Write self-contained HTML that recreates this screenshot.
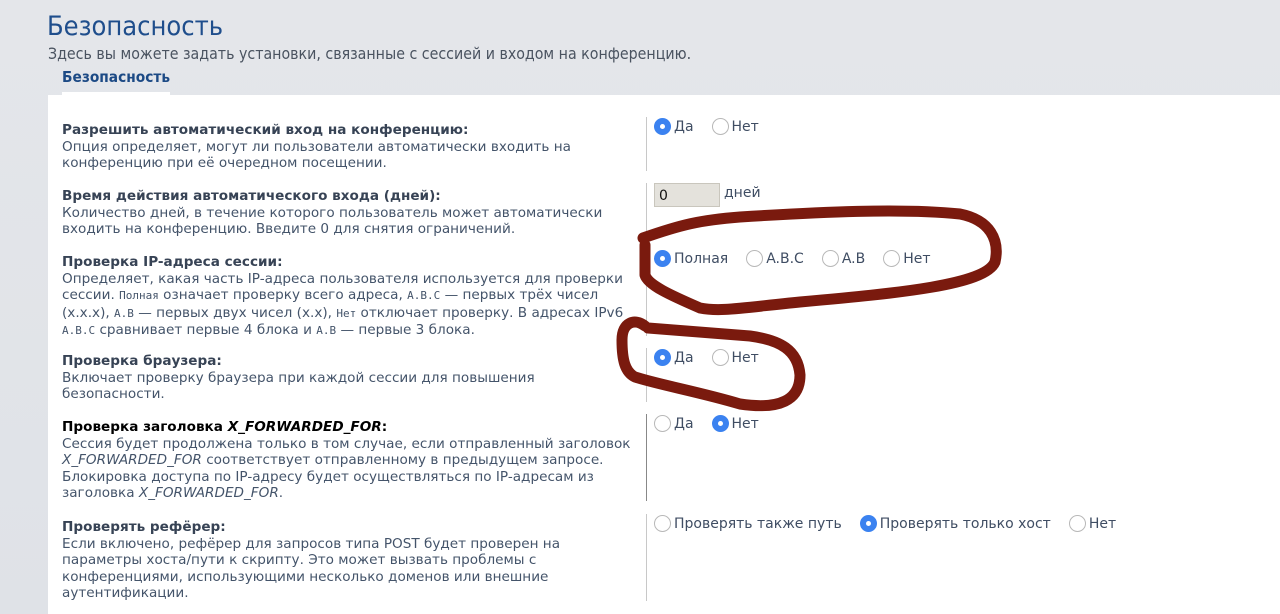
<!DOCTYPE html>
<html><head><meta charset="utf-8"><style>
body{margin:0;width:1280px;height:614px;overflow:hidden;background:linear-gradient(#e4e6ea,#dfe2e7);font-family:"DejaVu Sans","Liberation Sans",sans-serif;position:relative}
.t{position:absolute;left:47px;top:11px;font-size:27px;color:#1f4e8c;font-family:"DejaVu Sans Condensed","DejaVu Sans",sans-serif}
.sub{position:absolute;left:48px;top:44px;font-size:15.8px;color:#4a5360;font-family:"DejaVu Sans Condensed","DejaVu Sans",sans-serif}
.tab{position:absolute;left:62px;top:68px;font-size:15.3px;font-weight:bold;color:#1c4a85;font-family:"DejaVu Sans Condensed","DejaVu Sans",sans-serif}
.tabw{position:absolute;left:62px;top:92px;width:108px;height:4px;background:#fff}
.panel{position:absolute;left:48px;top:95px;right:0;bottom:0;background:#fff}
.row{position:absolute;left:62px;width:560px;font-size:13.6px;line-height:16.5px;color:#44546a}
.row b{color:#374355}
.row i{font-style:italic}
.m{font-family:"DejaVu Sans Mono",monospace;font-size:11px}
.vl{position:absolute;left:646px;width:1px;background:#c8c8c8}
.opt{position:absolute;font-size:14px;color:#3f4d63;display:flex;align-items:center}
.r{width:17px;height:17px;border-radius:50%;border:1px solid #b8b8b8;box-sizing:border-box;margin-right:3px;background:#fff}
.r.on{background:#3b82f0;border-color:#3b82f0;position:relative}
.r.on:after{content:"";position:absolute;left:5px;top:5px;width:5px;height:5px;border-radius:50%;background:#fff}
</style></head><body>
<div class="t">Безопасность</div>
<div class="sub">Здесь вы можете задать установки, связанные с сессией и входом на конференцию.</div>
<div class="tab">Безопасность</div>
<div class="panel"></div>
<div class="tabw"></div>

<div class="row" style="top:122px"><b>Разрешить автоматический вход на конференцию:</b><br>Опция определяет, могут ли пользователи автоматически входить на конференцию при её очередном посещении.</div>
<div class="row" style="top:188px"><b>Время действия автоматического входа (дней):</b><br>Количество дней, в течение которого пользователь может автоматически входить на конференцию. Введите 0 для снятия ограничений.</div>
<div class="row" style="top:254px;width:568px"><b>Проверка IP-адреса сессии:</b><br>Определяет, какая часть IP-адреса пользователя используется для проверки сессии. <span class="m">Полная</span> означает проверку всего адреса, <span class="m">A.B.C</span> — первых трёх чисел (x.x.x), <span class="m">A.B</span> — первых двух чисел (x.x), <span class="m">Нет</span> отключает проверку. В адресах IPv6 <span class="m">A.B.C</span> сравнивает первые 4 блока и <span class="m">A.B</span> — первые 3 блока.</div>
<div class="row" style="top:353px"><b>Проверка браузера:</b><br>Включает проверку браузера при каждой сессии для повышения безопасности.</div>
<div class="row" style="top:419px;width:575px"><b style="color:#000">Проверка заголовка <i>X_FORWARDED_FOR</i>:</b><br>Сессия будет продолжена только в том случае, если отправленный заголовок <i>X_FORWARDED_FOR</i> соответствует отправленному в предыдущем запросе. Блокировка доступа по IP-адресу будет осуществляться по IP-адресам из заголовка <i>X_FORWARDED_FOR</i>.</div>
<div class="row" style="top:519px"><b>Проверять рефёрер:</b><br>Если включено, рефёрер для запросов типа POST будет проверен на параметры хоста/пути к скрипту. Это может вызвать проблемы с конференциями, использующими несколько доменов или внешние аутентификации.</div>

<div class="vl" style="top:117px;height:54px"></div>
<div class="vl" style="top:183px;height:54px"></div>
<div class="vl" style="top:249px;height:87px"></div>
<div class="vl" style="top:348px;height:54px"></div>
<div class="vl" style="top:414px;height:87px;background:#888"></div>
<div class="vl" style="top:514px;height:87px"></div>

<div class="opt" style="left:654px;top:118px"><span class="r on"></span>Да<span style="width:18px"></span><span class="r"></span>Нет</div>
<div style="position:absolute;left:654px;top:183px;width:66px;height:24px;background:#e4e2dc;border:1px solid #c9c6bd;box-sizing:border-box;font-size:14px;padding:4px 4px;color:#111">0</div>
<div class="opt" style="left:724px;top:185px">дней</div>
<div class="opt" style="left:654px;top:250px"><span class="r on"></span>Полная<span style="width:18px"></span><span class="r"></span>A.B.C<span style="width:18px"></span><span class="r"></span>A.B<span style="width:18px"></span><span class="r"></span>Нет</div>
<div class="opt" style="left:654px;top:349px"><span class="r on"></span>Да<span style="width:18px"></span><span class="r"></span>Нет</div>
<div class="opt" style="left:654px;top:415px"><span class="r"></span>Да<span style="width:18px"></span><span class="r on"></span>Нет</div>
<div class="opt" style="left:654px;top:515px"><span class="r"></span>Проверять также путь<span style="width:18px"></span><span class="r on"></span>Проверять только хост<span style="width:18px"></span><span class="r"></span>Нет</div>

<svg style="position:absolute;left:0;top:0" width="1280" height="614">
<g fill="none" stroke="#7a1a0e" stroke-width="11" stroke-linecap="round" stroke-linejoin="round">
<path d="M643,238 C680,225 700,220 740,217 C820,212 900,208 960,214 C990,220 1000,240 995,262 C985,285 900,293 800,302 C740,308 720,312 700,308 C670,295 648,285 645,275 L645,245"/>
<path d="M645,326 C635,318 622,322 622,340 C622,360 625,372 635,377 C660,385 700,392 740,404 C780,410 800,400 800,375 C798,350 780,340 750,336 C700,332 670,330 648,328"/>
</g></svg>
</body></html>
